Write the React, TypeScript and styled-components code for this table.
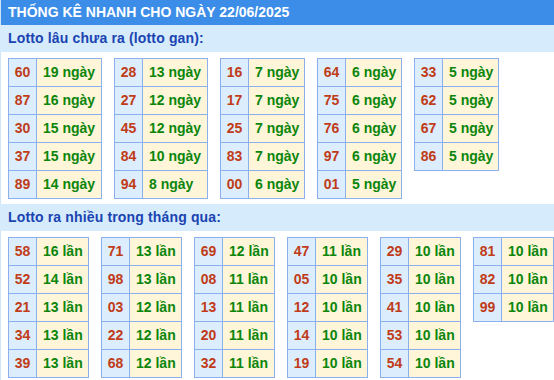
import React from "react";
import styled, { createGlobalStyle } from "styled-components";

const GlobalStyle = createGlobalStyle`
  html, body {
    margin: 0;
    padding: 0;
    background: #ffffff;
  }
  body {
    font-family: "Liberation Sans", Arial, sans-serif;
  }
`;

const Widget = styled.div`
  width: 554px;
  border-left: 1px solid #cfe3f8;
  box-sizing: border-box;
`;

const Header = styled.div`
  height: 25px;
  line-height: 25px;
  padding-left: 7px;
  background: #3b8de8;
  color: #ffffff;
  font-size: 14px;
  font-weight: bold;
  white-space: nowrap;
`;

const SectionTitle = styled.div`
  height: 27px;
  line-height: 27px;
  margin-left: -1px;
  padding-left: 8px;
  background: #d6ebfb;
  color: #1a44b2;
  font-size: 14px;
  font-weight: bold;
  letter-spacing: 0.15px;
`;

const TableRow = styled.div<{ $bottom: number }>`
  display: flex;
  flex-wrap: nowrap;
  align-items: flex-start;
  gap: 12px;
  padding: 6px 0 ${(p) => p.$bottom}px 7px;
`;

const Table = styled.table`
  border-collapse: collapse;
  table-layout: fixed;
  font-size: 14px;
  font-weight: bold;
`;

const NumCell = styled.td`
  box-sizing: border-box;
  width: 28px;
  border: 1px solid #8cb0ee;
  background: #dcedfd;
  color: #c03c18;
  text-align: center;
  padding: 5px 0;
  line-height: 17px;
`;

const CountCell = styled.td<{ $w: number }>`
  box-sizing: border-box;
  width: ${(p) => p.$w}px;
  border: 1px solid #8cb0ee;
  background: #fff5d9;
  color: #0b860b;
  text-align: left;
  padding: 5px 0 5px 6px;
  line-height: 17px;
  white-space: nowrap;
`;

type Pair = [string, number];

const gan: Pair[][] = [
  [["60", 19], ["87", 16], ["30", 15], ["37", 15], ["89", 14]],
  [["28", 13], ["27", 12], ["45", 12], ["84", 10], ["94", 8]],
  [["16", 7], ["17", 7], ["25", 7], ["83", 7], ["00", 6]],
  [["64", 6], ["75", 6], ["76", 6], ["97", 6], ["01", 5]],
  [["33", 5], ["62", 5], ["67", 5], ["86", 5]],
];

const nhieu: Pair[][] = [
  [["58", 16], ["52", 14], ["21", 13], ["34", 13], ["39", 13]],
  [["71", 13], ["98", 13], ["03", 12], ["22", 12], ["68", 12]],
  [["69", 12], ["08", 11], ["13", 11], ["20", 11], ["32", 11]],
  [["47", 11], ["05", 10], ["12", 10], ["14", 10], ["19", 10]],
  [["29", 10], ["35", 10], ["41", 10], ["53", 10], ["54", 10]],
  [["81", 10], ["82", 10], ["99", 10]],
];

function StatTable({
  rows,
  unit,
  countWidth,
}: {
  rows: Pair[];
  unit: string;
  countWidth: number;
}) {
  return (
    <Table>
      <tbody>
        {rows.map(([num, count]) => (
          <tr key={num}>
            <NumCell>{num}</NumCell>
            <CountCell $w={countWidth}>
              {count} {unit}
            </CountCell>
          </tr>
        ))}
      </tbody>
    </Table>
  );
}

// widest count decides the column, as the old auto-width tables did
const ganWidth = (rows: Pair[]) =>
  Math.max(...rows.map(([, c]) => c)) >= 10 ? 65 : 56;

export default function App() {
  return (
    <>
      <GlobalStyle />
      <Widget>
        <Header>THỐNG KÊ NHANH CHO NGÀY 22/06/2025</Header>
        <SectionTitle>Lotto lâu chưa ra (lotto gan):</SectionTitle>
        <TableRow $bottom={5}>
          {gan.map((rows, i) => (
            <StatTable
              key={i}
              rows={rows}
              unit="ngày"
              countWidth={ganWidth(rows)}
            />
          ))}
        </TableRow>
        <SectionTitle>Lotto ra nhiều trong tháng qua:</SectionTitle>
        <TableRow $bottom={3}>
          {nhieu.map((rows, i) => (
            <StatTable key={i} rows={rows} unit="lần" countWidth={52} />
          ))}
        </TableRow>
      </Widget>
    </>
  );
}
